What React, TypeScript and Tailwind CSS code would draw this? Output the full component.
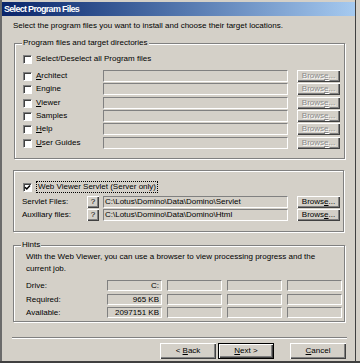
import React from "react";

const raised =
  "bg-[#d4d0c8] shadow-[inset_1px_1px_0_#fff,inset_-1px_-1px_0_#404040,inset_-2px_-2px_0_#808080]";
const sunken =
  "bg-[#d4d0c8] border border-t-[#808080] border-l-[#808080] border-b-white border-r-white";
const group =
  "relative border border-[#808080] shadow-[inset_1px_1px_0_#fff,1px_1px_0_#fff]";

function Check({ checked = false }: { checked?: boolean }) {
  return (
    <span className="relative inline-block w-[9px] h-[9px] shrink-0 bg-white border border-t-[#808080] border-l-[#808080] border-b-white border-r-white shadow-[inset_1px_1px_0_#404040]">
      {checked && (
        <svg viewBox="0 0 7 7" className="absolute left-0 top-0 w-[7px] h-[7px]">
          <path d="M1 3.2 L2.8 5 L6 1.6" stroke="black" strokeWidth="1.5" fill="none" />
        </svg>
      )}
    </span>
  );
}

function Browse({ disabled = false }: { disabled?: boolean }) {
  return (
    <div
      className={`${raised} ml-[9px] w-[43px] h-[12px] flex items-center justify-center leading-[10px] ${
        disabled ? "text-[#8a8a8a] [text-shadow:1px_1px_0_#fff]" : "text-black"
      }`}
    >
      <span>
        Brows<u className="underline-offset-1">e</u>...
      </span>
    </div>
  );
}

const rows: { label: React.ReactNode; mt: string }[] = [
  { label: <><u>A</u>rchitect</>, mt: "mt-[6px]" },
  { label: <>Engine</>, mt: "mt-[1px]" },
  { label: <><u>V</u>iewer</>, mt: "mt-[2px]" },
  { label: <>Samples</>, mt: "mt-[1px]" },
  { label: <><u>H</u>elp</>, mt: "mt-[1px]" },
  { label: <><u>U</u>ser Guides</>, mt: "mt-[2px]" },
];

export default function App() {
  return (
    <div className="w-[360px] h-[363px] bg-[#d4d0c8] border-b-2 border-b-[#404040] font-['Liberation_Sans',Arial,sans-serif] text-[8px] leading-[10px] text-black overflow-hidden">
      <div className="w-[356px] h-[361px] border-l-2 border-l-[#6b6b6b] border-r border-r-[#404040] pt-[2px] flex flex-col">
        {/* title bar */}
        <div className="h-[14px] bg-linear-to-r from-[#0a246a] to-[#a6caf0] flex items-center pl-[2px]">
          <span className="text-white font-bold text-[9px] tracking-[-0.7px] leading-[14px]">Select Program Files</span>
        </div>

        <div className="pl-[11px] mt-[5px]">
          Select the program files you want to install and choose their target locations.
        </div>

        {/* group 1 */}
        <div className={`${group} ml-[12px] mt-[12px] w-[331px] pt-[10px] pb-[9px]`}>
          <span className="absolute -top-[6px] left-[7px] px-[1px] bg-[#d4d0c8] leading-[10px]">
            Program files and target directories
          </span>
          <div className="h-[10px] flex items-center pl-[8px] gap-[4px]">
            <Check />
            <span>Select/Deselect all Program files</span>
          </div>
          {rows.map((r, i) => (
            <div key={i} className={`${r.mt} h-[12px] flex items-center`}>
              <div className="w-[88px] flex items-center pl-[8px] gap-[4px]">
                <Check />
                <span>{r.label}</span>
              </div>
              <div className={`${sunken} w-[185px] h-[12px]`} />
              <Browse disabled />
            </div>
          ))}
        </div>

        {/* group 2 */}
        <div className={`${group} ml-[11px] mt-[11px] w-[331px] pt-[11px] pb-[10px]`}>
          <div className="h-[10px] flex items-center pl-[9px] gap-[4px]">
            <Check checked />
            <span className="border border-dotted border-black px-[1px] leading-[10px]">
              Web Viewer Servlet (Server only)
            </span>
          </div>
          {[
            { label: "Servlet Files:", path: "C:\\Lotus\\Domino\\Data\\Domino\\Servlet", mt: "mt-[4px]" },
            { label: "Auxiliary files:", path: "C:\\Lotus\\Domino\\Data\\Domino\\Html", mt: "mt-[1px]" },
          ].map((r, i) => (
            <div key={i} className={`${r.mt} h-[12px] flex items-center`}>
              <div className="w-[73px] pl-[8px]">{r.label}</div>
              <div className={`${raised} w-[12px] h-[12px] flex items-center justify-center`}>?</div>
              <div className={`${sunken} ml-[4px] w-[185px] h-[12px] flex items-center pl-[1px] whitespace-nowrap`}>
                {r.path}
              </div>
              <Browse />
            </div>
          ))}
        </div>

        {/* hints */}
        <div className={`${group} ml-[11px] mt-[13px] w-[332px] pt-[5px] pb-[3px]`}>
          <span className="absolute -top-[6px] left-[7px] px-[1px] bg-[#d4d0c8] leading-[10px]">Hints</span>
          <div className="pl-[12px] leading-[12px]">
            With the Web Viewer, you can use a browser to view processing progress and the
            <br />
            current job.
          </div>
          {[
            { label: "Drive:", value: "C:", mt: "mt-[5px]" },
            { label: "Required:", value: "965 KB", mt: "mt-[3px]" },
            { label: "Available:", value: "2097151 KB", mt: "mt-[2px]" },
          ].map((r, i) => (
            <div key={i} className={`${r.mt} h-[11px] flex items-center`}>
              <div className="w-[93px] pl-[12px]">{r.label}</div>
              <div className="flex gap-[5px]">
                <div className={`${sunken} w-[55px] h-[11px] flex items-center justify-end pr-[2px]`}>{r.value}</div>
                <div className={`${sunken} w-[55px] h-[11px]`} />
                <div className={`${sunken} w-[55px] h-[11px]`} />
                <div className={`${sunken} w-[55px] h-[11px]`} />
              </div>
            </div>
          ))}
        </div>

        {/* separator */}
        <div className="ml-[10px] mt-[15px] w-[335px] h-[2px] border-t border-t-[#808080] border-b border-b-white" />

        {/* buttons */}
        <div className="mt-[4px] ml-[158px] flex">
          <div className={`${raised} w-[56px] h-[16px] flex items-center justify-center`}>
            <span>&lt; <u>B</u>ack</span>
          </div>
          <div className="ml-[2px] w-[56px] h-[16px] border border-black">
            <div className={`${raised} w-full h-full flex items-center justify-center`}>
              <span><u>N</u>ext &gt;</span>
            </div>
          </div>
          <div className={`${raised} ml-[16px] w-[56px] h-[16px] flex items-center justify-center`}>
            <span><u>C</u>ancel</span>
          </div>
        </div>
      </div>
    </div>
  );
}
